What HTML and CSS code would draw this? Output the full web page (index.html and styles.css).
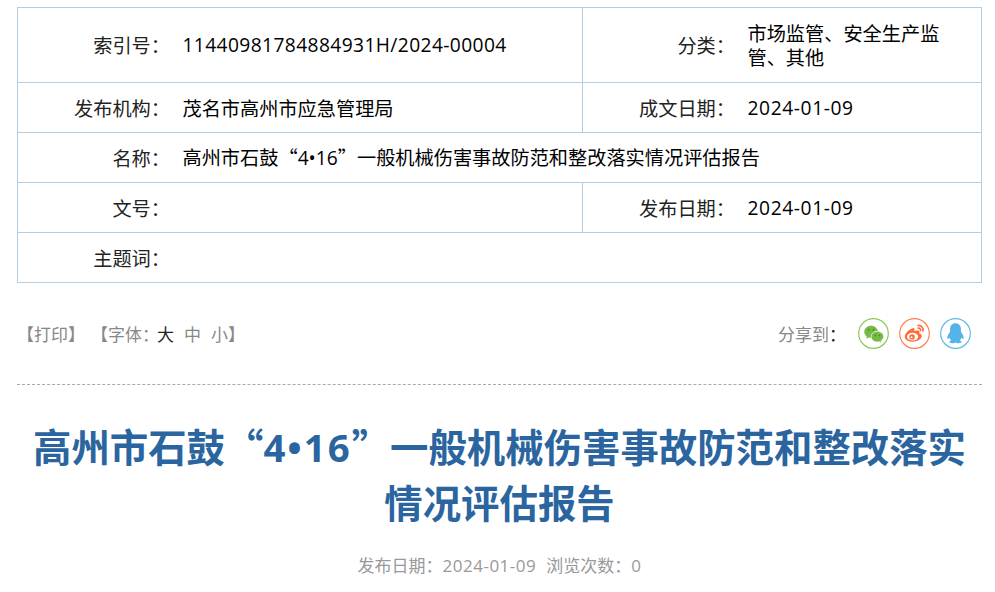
FILE: index.html
```html
<!DOCTYPE html>
<html lang="zh-CN">
<head>
<meta charset="utf-8">
<title>高州市石鼓“4·16”一般机械伤害事故防范和整改落实情况评估报告</title>
<link rel="stylesheet" href="styles.css">
</head>
<body>
<main class="page">
  <table class="info">
    <colgroup>
      <col class="c-label"><col class="c-value"><col class="c-label2"><col class="c-value2">
    </colgroup>
    <tr class="row-tall">
      <th>索引号：</th><td class="num">11440981784884931H/2024-00004</td>
      <th>分类：</th><td class="wrap">市场监管、安全生产监管、其他</td>
    </tr>
    <tr>
      <th>发布机构：</th><td>茂名市高州市应急管理局</td>
      <th>成文日期：</th><td class="num date">2024-01-09</td>
    </tr>
    <tr>
      <th>名称：</th><td colspan="3">高州市石鼓“<span class="lat">4•16</span>”一般机械伤害事故防范和整改落实情况评估报告</td>
    </tr>
    <tr>
      <th>文号：</th><td></td>
      <th>发布日期：</th><td class="num date">2024-01-09</td>
    </tr>
    <tr>
      <th>主题词：</th><td colspan="3"></td>
    </tr>
  </table>

  <div class="tools">
    <div class="tools-left">
      <span>【打印】</span>
      <span class="font-size">【字体<span class="colon">：</span><b class="active">大</b><b>中</b><b>小</b>】</span>
    </div>
    <div class="share">
      <span class="share-label">分享到<i>：</i></span>
      <a class="circle wechat" href="#" aria-label="微信">
        <svg viewBox="0 0 32 32" width="31" height="31">
          <circle cx="16" cy="16" r="15.300" fill="none" stroke="#8ac858" stroke-width="1.200"/>
          <path d="M13.500 8c-3.900 0-7 2.800-7 6.300 0 2 1 3.700 2.600 4.800L8.500 21.500l2.600-1.300c.8.300 1.600.4 2.400.4 3.900 0 7-2.800 7-6.300S17.400 8 13.500 8z" fill="#76b944"/>
          <path d="M20 13.800c-3.700 0-6.500 2.500-6.500 5.500s2.800 5.500 6.500 5.500c.7 0 1.400-.1 2-.3l2.500 1.300-.6-2.400c1.600-1 2.600-2.500 2.600-4.100 0-3-2.800-5.500-6.500-5.500z" fill="#76b944" stroke="#fff" stroke-width=".8"/>
          <circle cx="11" cy="12.200" r="1" fill="#4f8f25"/><circle cx="16" cy="12.200" r="1" fill="#4f8f25"/>
          <circle cx="17.800" cy="18" r=".9" fill="#4f8f25"/><circle cx="22.200" cy="18" r=".9" fill="#4f8f25"/>
        </svg>
      </a>
      <a class="circle weibo" href="#" aria-label="微博">
        <svg viewBox="0 0 32 32" width="31" height="31">
          <circle cx="16" cy="16" r="15.300" fill="none" stroke="#ff7d4d" stroke-width="1.200"/>
          <path d="M14.500 10.500c-4 1-8.500 5-8.500 8.800 0 3.400 4.300 5.200 8.300 5.200 5.300 0 9.200-3 9.200-5.800 0-1.800-1.500-2.500-2.500-2.800.6-1.600.1-2.800-1.800-3-1.100-.1-2.500.4-3.300.7.400-1.700.1-3.700-1.400-3.100z" fill="#ff6b35"/>
          <ellipse cx="14" cy="19.300" rx="5.800" ry="4" fill="#fff"/>
          <circle cx="13.500" cy="19.500" r="2.800" fill="#ff6b35"/>
          <circle cx="13" cy="19.800" r="1" fill="#fff"/>
          <path d="M19.500 7.700c3.300-.6 6 2.300 5.200 5.600M19.800 10.500c1.500-.3 2.700 1 2.300 2.500" fill="none" stroke="#ff6b35" stroke-width="1.700" stroke-linecap="round"/>
        </svg>
      </a>
      <a class="circle qq" href="#" aria-label="QQ">
        <svg viewBox="0 0 32 32" width="31" height="31">
          <circle cx="16" cy="16" r="15.300" fill="none" stroke="#5bb8ea" stroke-width="1.200"/>
          <path d="M16 5.500c-3.600 0-5.600 2.700-5.600 6v2.600c-1.500 2-2.900 4.400-2.900 6.600 0 1.200.8 1.300 2.400-.2.300 1 .8 1.900 1.500 2.600-1.200.5-1.900 1.100-1.800 1.800.1.900 2.200 1.300 4 1.100 1-.1 1.700-.4 2.400-.8.700.4 1.400.7 2.400.8 1.800.2 3.900-.2 4-1.100.1-.7-.6-1.300-1.800-1.800.7-.7 1.200-1.600 1.500-2.600 1.600 1.500 2.400 1.400 2.400.2 0-2.200-1.400-4.600-2.900-6.600v-2.600c0-3.300-2-6-5.600-6z" fill="#54b4ea"/>
        </svg>
      </a>
    </div>
  </div>

  <h1 class="title">高州市石鼓“<span class="lat">4•16</span>”一般机械伤害事故防范和整改落实情况评估报告</h1>
  <p class="meta"><span>发布日期：<span class="lat">2024-01-09</span></span><span>浏览次数：<span class="lat">0</span></span></p>
</main>
</body>
</html>
```

FILE: styles.css
```css
html, body {
  margin: 0;
  padding: 0;
  background: #fff;
}

body {
  font-family: "Noto Sans CJK SC", "Liberation Sans", sans-serif;
  color: #000;
  overflow: hidden;
}

.page {
  width: 965px;
  margin: 0 auto 0 17px;
  padding-top: 7px;
}

.info {
  width: 965px;
  table-layout: fixed;
  border-collapse: separate;
  border-spacing: 0;
  border-top: 1px solid #b3cee3;
  border-left: 1px solid #b3cee3;
  border-right: 1px solid #b3cee3;
  font-size: 19.2px;
}

.c-label { width: 152px; }
.c-value { width: 413px; }
.c-label2 { width: 152px; }
.c-value2 { width: 246px; }

.info tr { height: 50px; }
.info .row-tall { height: 75px; }

.info th,
.info td {
  border-bottom: 1px solid #b3cee3;
  padding: 0;
  line-height: 24px;
  vertical-align: middle;
}

.info th {
  font-weight: 400;
  text-align: right;
  color: #222;
}

.info td {
  padding-left: 12.5px;
  padding-right: 30px;
}

.info td:nth-child(2):not([colspan]) {
  border-right: 1px solid #b3cee3;
}

.lat,
.info .num {
  font-family: "Open Sans", "Noto Sans CJK SC", sans-serif;
}

.info .num { letter-spacing: .4px; }
.info .date { letter-spacing: .6px; }

.tools {
  display: flex;
  justify-content: space-between;
  align-items: center;
  height: 101px;
  padding-right: 11px;
  border-bottom: 1px dashed #aaa;
  color: #888;
  font-size: 17px;
}

.tools-left {
  display: flex;
  gap: 6px;
}

.colon { letter-spacing: -2px; }

.font-size b {
  font-weight: 400;
  margin-right: 10px;
}

.font-size .active { color: #222; }
.font-size b:last-of-type { margin-right: 0; }

.share {
  display: flex;
  align-items: center;
}

.share-label { margin-right: 2px; }
.share-label i { font-style: normal; color: #222; }

.circle {
  display: block;
  width: 31px;
  height: 31px;
  margin-left: 10px;
}

.circle svg { display: block; }

.title {
  margin: 33px 0 0;
  font-size: 38.4px;
  line-height: 54px;
  font-weight: 700;
  text-align: center;
  color: #2b659f;
}

.title .lat { letter-spacing: 2px; }

.meta {
  display: flex;
  justify-content: center;
  gap: 10px;
  margin: 23px 0 0;
  font-size: 17px;
  line-height: 28px;
  color: #999;
}

.meta .lat { letter-spacing: .5px; }
```
